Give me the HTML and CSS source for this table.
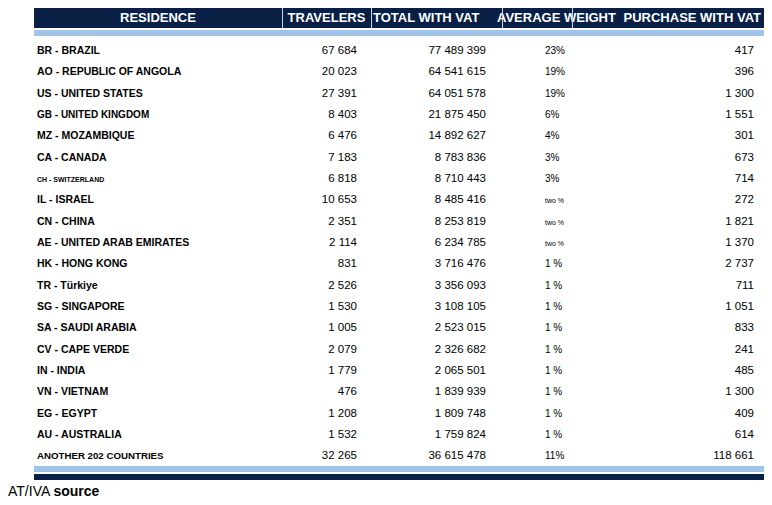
FILE: index.html
```html
<!DOCTYPE html>
<html lang="en">
<head>
<meta charset="UTF-8">
<title>Residence of travelers</title>
<link rel="stylesheet" href="styles.css">
</head>
<body>
<div class="table-wrap">
  <table class="vat-table">
    <colgroup>
      <col class="c-res">
      <col class="c-trav">
      <col class="c-total">
      <col class="c-avg">
      <col class="c-buy">
    </colgroup>
    <thead>
      <tr class="head-row">
        <th class="h-res">RESIDENCE</th>
        <th class="h-trav">TRAVELERS</th>
        <th class="h-total">TOTAL WITH VAT</th>
        <th class="h-avg"><span>AVERAGE WEIGHT</span></th>
        <th class="h-buy">PURCHASE WITH VAT</th>
      </tr>
      <tr class="band-row"><td colspan="5"></td></tr>
    </thead>
    <tbody>
      <tr><td class="res">BR - BRAZIL</td><td>67 684</td><td>77 489 399</td><td class="pct">23%</td><td>417</td></tr>
      <tr><td class="res">AO - REPUBLIC OF ANGOLA</td><td>20 023</td><td>64 541 615</td><td class="pct">19%</td><td>396</td></tr>
      <tr><td class="res">US - UNITED STATES</td><td>27 391</td><td>64 051 578</td><td class="pct">19%</td><td>1 300</td></tr>
      <tr><td class="res small">GB - UNITED KINGDOM</td><td>8 403</td><td>21 875 450</td><td class="pct">6%</td><td>1 551</td></tr>
      <tr><td class="res">MZ - MOZAMBIQUE</td><td>6 476</td><td>14 892 627</td><td class="pct">4%</td><td>301</td></tr>
      <tr><td class="res">CA - CANADA</td><td>7 183</td><td>8 783 836</td><td class="pct">3%</td><td>673</td></tr>
      <tr><td class="res tiny">CH - SWITZERLAND</td><td>6 818</td><td>8 710 443</td><td class="pct">3%</td><td>714</td></tr>
      <tr><td class="res">IL - ISRAEL</td><td>10 653</td><td>8 485 416</td><td class="pct mini">two %</td><td>272</td></tr>
      <tr><td class="res">CN - CHINA</td><td>2 351</td><td>8 253 819</td><td class="pct mini">two %</td><td>1 821</td></tr>
      <tr><td class="res">AE - UNITED ARAB EMIRATES</td><td>2 114</td><td>6 234 785</td><td class="pct mini">two %</td><td>1 370</td></tr>
      <tr><td class="res">HK - HONG KONG</td><td>831</td><td>3 716 476</td><td class="pct">1 %</td><td>2 737</td></tr>
      <tr><td class="res">TR - Türkiye</td><td>2 526</td><td>3 356 093</td><td class="pct">1 %</td><td>711</td></tr>
      <tr><td class="res">SG - SINGAPORE</td><td>1 530</td><td>3 108 105</td><td class="pct">1 %</td><td>1 051</td></tr>
      <tr><td class="res">SA - SAUDI ARABIA</td><td>1 005</td><td>2 523 015</td><td class="pct">1 %</td><td>833</td></tr>
      <tr><td class="res">CV - CAPE VERDE</td><td>2 079</td><td>2 326 682</td><td class="pct">1 %</td><td>241</td></tr>
      <tr><td class="res">IN - INDIA</td><td>1 779</td><td>2 065 501</td><td class="pct">1 %</td><td>485</td></tr>
      <tr><td class="res">VN - VIETNAM</td><td>476</td><td>1 839 939</td><td class="pct">1 %</td><td>1 300</td></tr>
      <tr><td class="res">EG - EGYPT</td><td>1 208</td><td>1 809 748</td><td class="pct">1 %</td><td>409</td></tr>
      <tr><td class="res">AU - AUSTRALIA</td><td>1 532</td><td>1 759 824</td><td class="pct">1 %</td><td>614</td></tr>
      <tr><td class="res smaller">ANOTHER 202 COUNTRIES</td><td>32 265</td><td>36 615 478</td><td class="pct">11%</td><td>118 661</td></tr>
    </tbody>
    <tfoot>
      <tr class="band-row"><td colspan="5"></td></tr>
      <tr class="foot-row"><td colspan="5"></td></tr>
    </tfoot>
  </table>
</div>
<p class="source">AT/IVA <strong>source</strong></p>
</body>
</html>
```

FILE: styles.css
```css
body {
  margin: 8px;
  font-family: "Liberation Sans", Arial, sans-serif;
  background: #ffffff;
  color: #000000;
}

.table-wrap {
  margin-left: 26px;
}

.vat-table {
  width: 731px;
  table-layout: fixed;
  border-collapse: collapse;
}

.c-res { width: 248px; }
.c-trav { width: 89px; }
.c-total { width: 131px; }
.c-avg { width: 70px; }
.c-buy { width: 193px; }

/* header */
.head-row {
  background: #0a1f45;
  height: 20px;
}

.head-row th {
  position: relative;
  padding: 0;
  color: #ffffff;
  font-size: 13px;
  font-weight: bold;
  line-height: 20px;
  white-space: nowrap;
  overflow: visible;
}

/* column dividers sit over the header text */
.head-row th + th::before {
  content: "";
  position: absolute;
  left: 0;
  top: 0;
  bottom: 0;
  width: 1px;
  background: #cdd5df;
  z-index: 1;
}

.h-res { text-align: center; }
.h-trav { text-align: center; }
.head-row .h-total { text-align: left; padding-left: 2px; }
.h-avg { text-align: left; }
.h-avg span { margin-left: -5px; }
.head-row .h-buy { text-align: right; padding-right: 4px; }

.band-row td {
  padding: 0;
  height: 6px;
  background: #9fc4e8;
  border-top: 2px solid #ffffff;
}

tfoot .band-row td {
  border-top: none;
  border-bottom: 2px solid #ffffff;
}

.foot-row td {
  padding: 0;
  height: 6px;
  background: #0a1f45;
}

/* body rows */
tbody td {
  box-sizing: border-box;
  height: 21.33px;
  padding: 5px 0 0 0;
  font-size: 11.5px;
  text-align: right;
  vertical-align: baseline;
  white-space: nowrap;
}

tbody tr:first-child td {
  height: 24.33px;
  padding-top: 8px;
}

tbody td:nth-child(2) { padding-right: 14px; }
tbody td:nth-child(3) { padding-right: 16px; }
tbody td:nth-child(5) { padding-right: 11px; }

td.res {
  text-align: left;
  padding-left: 3px;
  font-weight: bold;
  font-size: 10.5px;
}

td.res.small { font-size: 10px; }
td.res.smaller { font-size: 9.7px; }
td.res.tiny { font-size: 7px; }

td.pct {
  text-align: left;
  padding-left: 43px;
  font-size: 10px;
}

td.pct.mini {
  font-size: 7px;
}

.source {
  margin: 3px 0 0 0;
  font-size: 14px;
}
```
